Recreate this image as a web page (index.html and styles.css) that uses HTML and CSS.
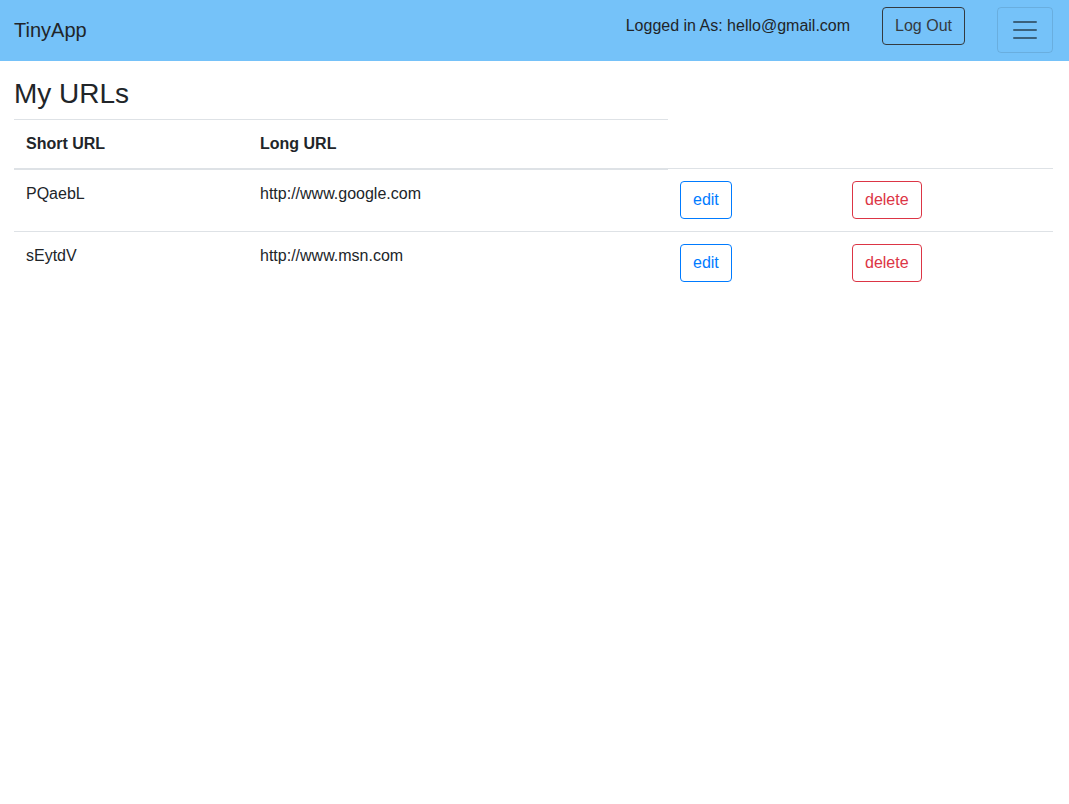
FILE: index.html
```html
<!DOCTYPE html>
<html lang="en">
<head>
<meta charset="utf-8">
<title>TinyApp</title>
<link rel="stylesheet" href="styles.css">
</head>
<body>
<nav class="navbar">
  <a class="brand" href="#">TinyApp</a>
  <div class="nav-right">
    <div class="user-group">
      <span class="logged">Logged in As: hello@gmail.com</span>
      <button class="btn btn-dark-outline">Log Out</button>
    </div>
    <button class="toggler" aria-label="Toggle navigation">
      <svg width="30" height="30" viewBox="0 0 30 30"><path d="M4 7h22M4 15h22M4 23h22" stroke="rgba(0,0,0,0.5)" stroke-width="2" stroke-linecap="round" fill="none"/></svg>
    </button>
  </div>
</nav>
<main class="content">
  <h3 class="title">My URLs</h3>
  <table class="table">
    <colgroup>
      <col class="c1"><col class="c2"><col class="c3"><col class="c4">
    </colgroup>
    <thead>
      <tr><th>Short URL</th><th>Long URL</th></tr>
    </thead>
    <tbody>
      <tr>
        <td>PQaebL</td>
        <td>http://www.google.com</td>
        <td><button class="btn btn-blue">edit</button></td>
        <td><button class="btn btn-red">delete</button></td>
      </tr>
      <tr>
        <td>sEytdV</td>
        <td>http://www.msn.com</td>
        <td><button class="btn btn-blue">edit</button></td>
        <td><button class="btn btn-red">delete</button></td>
      </tr>
    </tbody>
  </table>
</main>
</body>
</html>
```
FILE: styles.css
```css
* { box-sizing: border-box; }
html, body { margin: 0; padding: 0; }
body {
  font-family: "Liberation Sans", Arial, sans-serif;
  font-size: 16px;
  line-height: 1.5;
  color: #212529;
  background: #fff;
}
.navbar {
  height: 61px;
  background: #75c2f9;
  display: flex;
  align-items: center;
  justify-content: space-between;
  padding: 7px 16px 8px 14px;
}
.brand {
  font-size: 20px;
  line-height: 30px;
  color: #212529;
  text-decoration: none;
}
.nav-right {
  display: flex;
  align-items: flex-start;
  gap: 32px;
  align-self: stretch;
}
.user-group {
  display: flex;
  align-items: center;
  gap: 32px;
}
.logged { color: #212529; }
.btn {
  font-family: "Liberation Sans", Arial, sans-serif;
  font-size: 16px;
  line-height: 24px;
  padding: 6px 12px;
  border: 1px solid;
  border-radius: 4px;
  background: transparent;
  cursor: pointer;
  display: inline-block;
}
.btn-dark-outline { color: #343a40; border-color: #343a40; }
.btn-blue { color: #007bff; border-color: #007bff; }
.btn-red { color: #dc3545; border-color: #dc3545; }
.toggler {
  width: 56px;
  height: 46px;
  padding: 0;
  display: flex;
  align-items: center;
  justify-content: center;
  background: transparent;
  border: 1px solid rgba(0,0,0,0.1);
  border-radius: 4px;
}
.toggler svg { display: block; }
.content {
  padding: 0 16px 0 14px;
}
.title {
  font-family: "Liberation Sans", Arial, sans-serif;
  font-weight: 400;
  font-size: 28px;
  line-height: 1.2;
  margin: 16px 0 8px;
}
.table {
  width: 100%;
  border-collapse: collapse;
  table-layout: fixed;
}
.c1 { width: 234px; }
.c2 { width: 420px; }
.c3 { width: 172px; }
.table th, .table td {
  padding: 12px;
  vertical-align: top;
  text-align: left;
  border-top: 1px solid #dee2e6;
}
.table th {
  font-weight: 700;
  border-bottom: 2px solid #dee2e6;
}
.table td .btn { vertical-align: top; }
```
